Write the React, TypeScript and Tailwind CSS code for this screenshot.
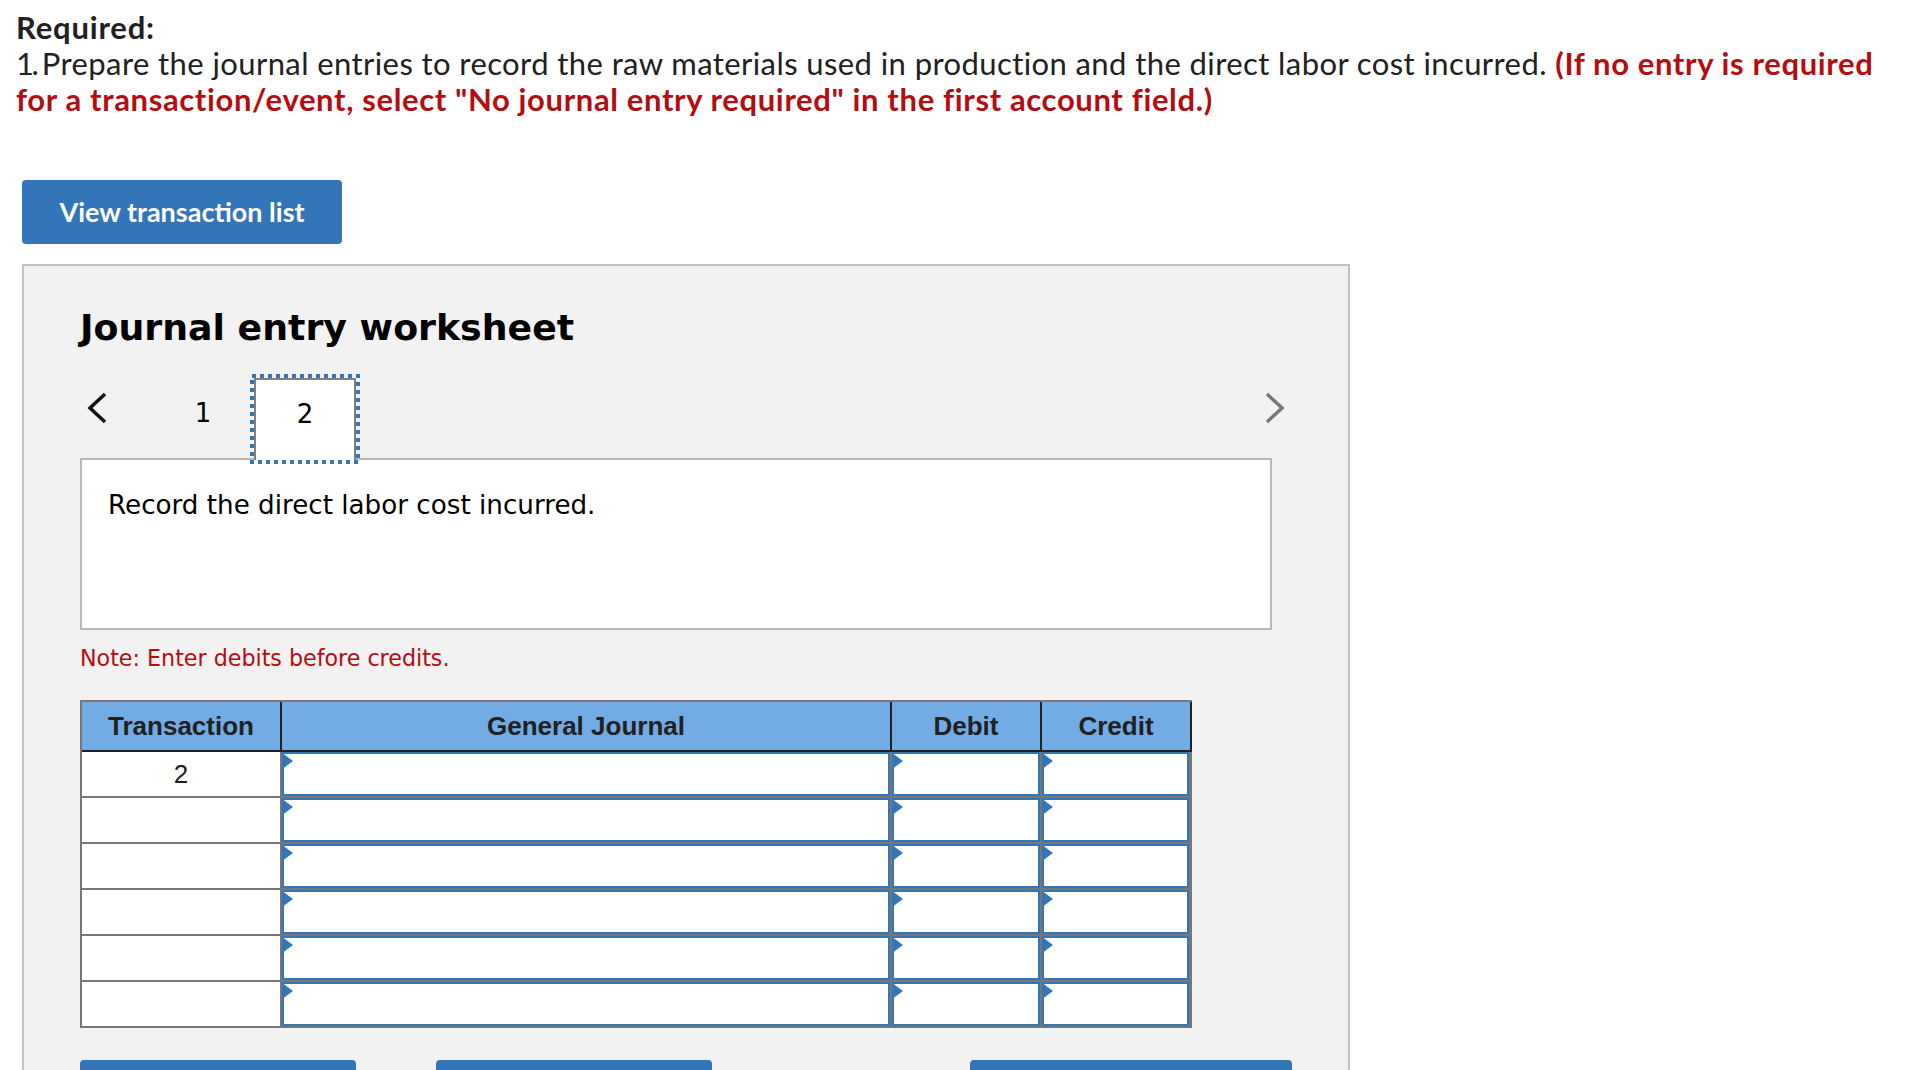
const Blue = "#3375b9";

function Cell({ last }: { last?: boolean }) {
  return (
    <div className={`relative border-b-2 border-[#777777] ${last ? "border-r-[3px] border-r-[#777777]" : "border-r-2 border-r-[#777777]"}`}>
      <div className="h-[44px] border-2 border-[#3375b9] bg-white" />
      <svg className="absolute left-0 top-0" width="12" height="18" viewBox="0 0 12 18">
        <path d="M0 2H1.5L11 9L1.5 16H0Z" fill={Blue} />
      </svg>
    </div>
  );
}

function Row({ value }: { value?: string }) {
  return (
    <>
      <div className="flex h-[46px] items-center justify-center border-r-2 border-b-2 border-[#777777] bg-white text-[26px] text-[#212121]">
        {value}
      </div>
      <Cell />
      <Cell />
      <Cell last />
    </>
  );
}

function Head({ children }: { children: React.ReactNode }) {
  return (
    <div className="flex h-[50px] items-center justify-center border-r-2 border-b-2 border-[#212121] bg-[#73ace5] text-[26px] font-bold text-[#212121]">
      {children}
    </div>
  );
}

export default function App() {
  return (
    <div className="h-[1070px] overflow-hidden bg-white font-['Lato',sans-serif]">
      <div className="pl-[16px] pt-[9px] pr-[20px] text-[31px] leading-[36px] tracking-[0.41px] text-[#212121]">
        <div className="font-bold tracking-[0.8px]">Required:</div>
        <div>
          <span className="tracking-[-2.5px]">1. </span>
          Prepare the journal entries to record the raw materials used in production and the direct labor cost incurred.{" "}
          <span className="font-bold tracking-[0.63px] text-[#b30d11]">
            (If no entry is required for a transaction/event, select "No journal entry required" in the first account field.)
          </span>
        </div>
      </div>

      <div className="ml-[22px] mt-[63px] flex h-[64px] w-[320px] items-center justify-center rounded-[4px] bg-[#3375b9] text-[27px] font-bold text-white">
        View transaction list
      </div>

      <div className="ml-[22px] mt-[20px] h-[900px] w-[1328px] border-2 border-[#c0c0c0] bg-[#f2f2f2] pl-[56px] font-['DejaVu_Sans',sans-serif]">
        <div className="mt-[37px] text-[36.3px] font-bold leading-[50px] text-black">Journal entry worksheet</div>

        <div className="relative z-10 mt-[25px] flex h-[82px] w-[1206px] -mb-[2px] text-[26px] text-black">
          <svg className="mt-[13px] ml-[6px]" width="24" height="34" viewBox="0 0 24 34">
            <path d="M19 3L4 17L19 31" fill="none" stroke="#111111" strokeWidth="3.5" />
          </svg>
          <div className="ml-[68px] flex h-[70px] w-[50px] items-center justify-center">1</div>
          <div className="relative ml-[26px] flex h-full w-[102px] items-start justify-center border-x-2 border-t-2 border-[#808080] bg-white pt-[15px]">
            2
            <svg className="absolute -left-[6px] -top-[6px]" width="110" height="90" viewBox="0 0 110 90">
              <rect x="2" y="2" width="106" height="86" fill="none" stroke="#3375b9" strokeWidth="4" strokeDasharray="4 4" />
            </svg>
          </div>
          <svg className="mt-[13px] ml-auto" width="24" height="34" viewBox="0 0 24 34">
            <path d="M5 3L20 17L5 31" fill="none" stroke="#777777" strokeWidth="3.5" />
          </svg>
        </div>

        <div className="h-[172px] w-[1192px] border-2 border-[#b9b9b9] bg-white pl-[26px] pt-[26px] text-[26.2px] leading-[38px] text-black">
          Record the direct labor cost incurred.
        </div>

        <div className="mt-[13px] text-[22.2px] leading-[30px] text-[#b30d11]">Note: Enter debits before credits.</div>

        <div className="mt-[27px] w-[1112px] border-t-2 border-l-2 border-[#777777] font-['Liberation_Sans',sans-serif]">
          <div className="grid grid-cols-[200px_610px_150px_150px]">
            <Head>Transaction</Head>
            <Head>General Journal</Head>
            <Head>Debit</Head>
            <Head>Credit</Head>
            <Row value="2" />
            <Row />
            <Row />
            <Row />
            <Row />
            <Row />
          </div>
        </div>

        <div className="mt-[32px] flex w-[1212px]">
          <div className="h-[64px] w-[276px] rounded-[4px] bg-[#3375b9]" />
          <div className="ml-[80px] h-[64px] w-[276px] rounded-[4px] bg-[#3375b9]" />
          <div className="ml-auto h-[64px] w-[322px] rounded-[4px] bg-[#3375b9]" />
        </div>
      </div>
    </div>
  );
}
